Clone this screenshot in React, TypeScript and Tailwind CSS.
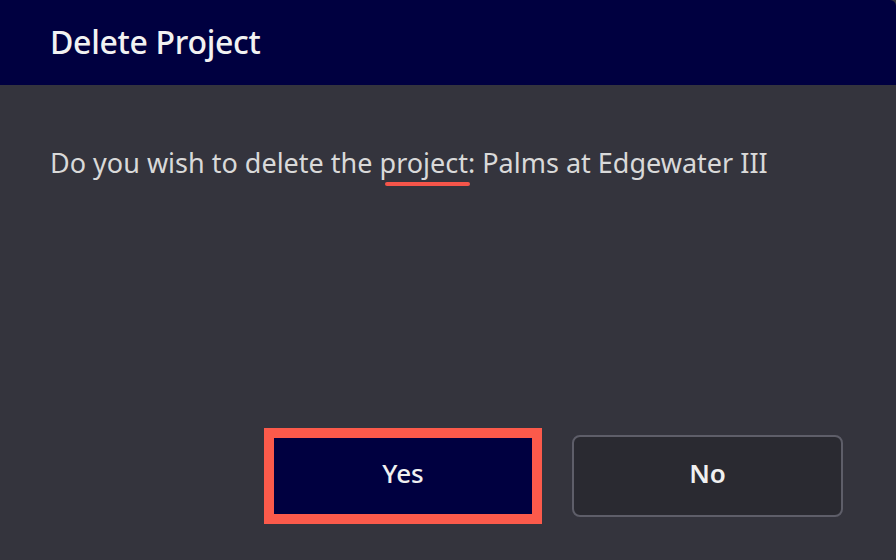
import React from 'react';

const App: React.FC = () => {
  return (
    <div
      className="w-[896px] h-[560px] flex flex-col bg-[#34343d] overflow-hidden"
      style={{ fontFamily: '"Noto Sans", "Open Sans", sans-serif' }}
    >
      <div className="h-[85px] shrink-0 bg-[#000040] flex items-center px-[50px] pb-[2px] rounded-tr-[6px]">
        <h2 className="text-[32px] font-medium text-[#f2f2f2] tracking-[-0.3px]">Delete Project</h2>
      </div>

      <div className="flex-1 flex flex-col px-[50px] pt-[60px]">
        <p className="text-[27px] leading-[36px] text-[#d9d9d9]">
          Do you wish to delete the{' '}
          <span className="relative">
            project
            <span className="absolute left-[5px] right-[-2px] top-[38px] h-[4px] rounded-full bg-[#f5554a]" />
          </span>
          : Palms at Edgewater III
        </p>
      </div>

      <div className="flex items-center justify-end gap-[30px] pr-[53px] pb-[36px]">
        <div className="border-[10px] border-[#fb5a4b]">
          <button
            type="button"
            className="w-[258px] h-[76px] pb-[6px] bg-[#000040] text-[26px] font-medium text-[#f0f0f0] flex items-center justify-center"
          >
            Yes
          </button>
        </div>
        <button
          type="button"
          className="w-[271px] h-[82px] pb-[6px] rounded-[8px] border-2 border-[#5e5e69] bg-[#2a2a31] text-[26px] font-semibold text-[#f0f0f0] flex items-center justify-center"
        >
          No
        </button>
      </div>
    </div>
  );
};

export default App;
